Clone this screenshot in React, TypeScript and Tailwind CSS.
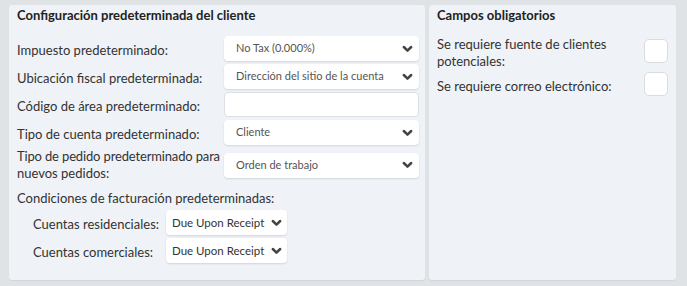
import React from 'react';

function Chevron() {
  return (
    <svg width="11" height="8" viewBox="0 0 11 8" className="shrink-0">
      <path d="M1.8 2 L5.5 5.6 L9.2 2" fill="none" stroke="#444" strokeWidth="2.5" strokeLinecap="round" strokeLinejoin="round" />
    </svg>
  );
}

function Select({ value, small }: { value: string; small?: boolean }) {
  return (
    <div
      className={`flex items-center justify-between h-[25px] bg-white rounded-[4px] shadow-[0_1px_2px_rgba(0,0,0,0.12)] ${
        small ? 'w-[121px] pl-[6px] pr-[5px] text-[11.5px] text-[#333]' : 'w-[195px] pl-[12px] pr-[6px] text-[11px] text-[#555]'
      }`}
    >
      <span className="whitespace-nowrap">{value}</span>
      <Chevron />
    </div>
  );
}

function Row({ label, multi, children }: { label: React.ReactNode; multi?: boolean; children: React.ReactNode }) {
  return (
    <div className="flex items-center">
      <div className={`w-[207px] leading-[17px] ${multi ? '' : 'pt-1'}`}>{label}</div>
      {children}
    </div>
  );
}

function CheckRow({ label }: { label: string }) {
  return (
    <div className="flex items-center">
      <div className="w-[190px] mr-[17px] pt-1 leading-[17px]">{label}</div>
      <div className="w-[24px] h-[24px] bg-white border border-[#d9dde1] rounded-[5px]" />
    </div>
  );
}

export default function App() {
  return (
    <div
      className="w-[687px] h-[286px] bg-[#dfe3e6] pt-[5px] pl-[9px] flex gap-[4px] text-[13px] text-[#333]"
      style={{ fontFamily: 'Lato, "Open Sans", sans-serif' }}
    >
      {/* Left panel */}
      <div className="w-[416px] h-[275px] bg-[#eff2f6] rounded-[3px] shadow-[0_1px_1px_rgba(0,0,0,0.06)] pl-2 pt-px">
        <h2 className="font-bold text-[#222] leading-[18px]">Configuración predeterminada del cliente</h2>
        <div className="mt-[12px] flex flex-col gap-[3px]">
          <Row label="Impuesto predeterminado:">
            <Select value="No Tax (0.000%)" />
          </Row>
          <Row label="Ubicación fiscal predeterminada:">
            <Select value="Dirección del sitio de la cuenta" />
          </Row>
          <Row label="Código de área predeterminado:">
            <div className="w-[195px] h-[25px] bg-white border border-[#dcdfe3] rounded-[4px]" />
          </Row>
          <Row label="Tipo de cuenta predeterminado:">
            <Select value="Cliente" />
          </Row>
          <Row
            multi
            label={
              <>
                <span className="whitespace-nowrap tracking-[-0.15px]">Tipo de pedido predeterminado para</span>
                <br />
                nuevos pedidos:
              </>
            }
          >
            <Select value="Orden de trabajo" />
          </Row>
        </div>
        <div className="mt-[8px] leading-[17px]">Condiciones de facturación predeterminadas:</div>
        <div className="mt-[3px] ml-4 flex flex-col gap-[3px]">
          <div className="flex items-center">
            <div className="w-[133px] pt-1 leading-[17px]">Cuentas residenciales:</div>
            <Select value="Due Upon Receipt" small />
          </div>
          <div className="flex items-center">
            <div className="w-[133px] pt-1 leading-[17px]">Cuentas comerciales:</div>
            <Select value="Due Upon Receipt" small />
          </div>
        </div>
      </div>

      {/* Right panel */}
      <div className="w-[247px] h-[275px] bg-[#eff2f6] rounded-[3px] shadow-[0_1px_1px_rgba(0,0,0,0.06)] pl-2 pt-px">
        <h2 className="font-bold text-[#222] leading-[18px]">Campos obligatorios</h2>
        <div className="mt-[8px] flex flex-col gap-[2px]">
          <CheckRow label="Se requiere fuente de clientes potenciales:" />
          <CheckRow label="Se requiere correo electrónico:" />
        </div>
      </div>
    </div>
  );
}
